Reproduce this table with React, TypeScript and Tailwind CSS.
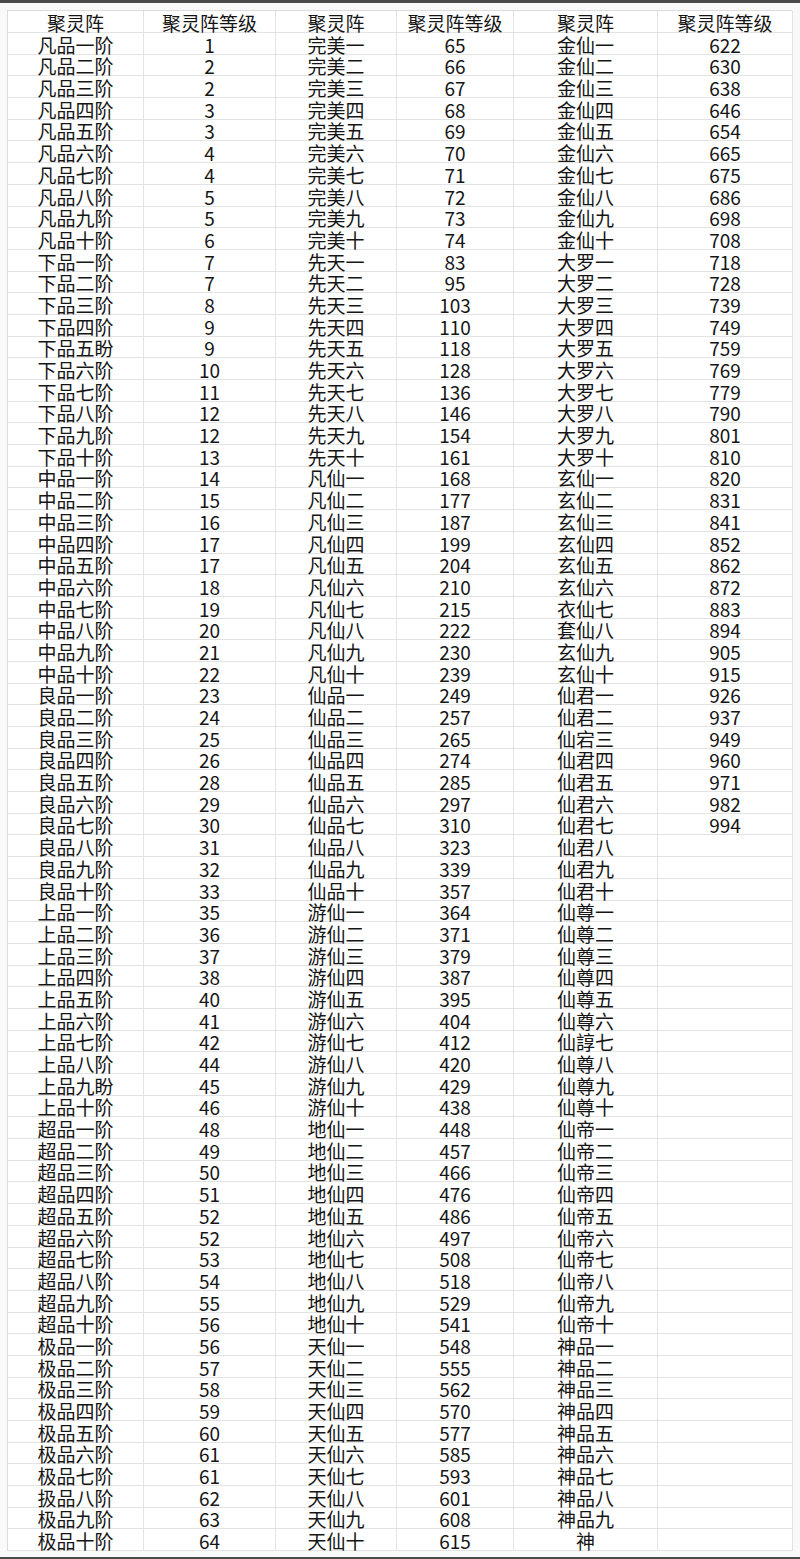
import React from "react";

const c1 = [
  "凡品一阶","凡品二阶","凡品三阶","凡品四阶","凡品五阶","凡品六阶","凡品七阶","凡品八阶","凡品九阶","凡品十阶",
  "下品一阶","下品二阶","下品三阶","下品四阶","下品五盼","下品六阶","下品七阶","下品八阶","下品九阶","下品十阶",
  "中品一阶","中品二阶","中品三阶","中品四阶","中品五阶","中品六阶","中品七阶","中品八阶","中品九阶","中品十阶",
  "良品一阶","良品二阶","良品三阶","良品四阶","良品五阶","良品六阶","良品七阶","良品八阶","良品九阶","良品十阶",
  "上品一阶","上品二阶","上品三阶","上品四阶","上品五阶","上品六阶","上品七阶","上品八阶","上品九盼","上品十阶",
  "超品一阶","超品二阶","超品三阶","超品四阶","超品五阶","超品六阶","超品七阶","超品八阶","超品九阶","超品十阶",
  "极品一阶","极品二阶","极品三阶","极品四阶","极品五阶","极品六阶","极品七阶","扱品八阶","极品九阶","极品十阶",
];
const c2 = [1,2,2,3,3,4,4,5,5,6,7,7,8,9,9,10,11,12,12,13,14,15,16,17,17,18,19,20,21,22,23,24,25,26,28,29,30,31,32,33,35,36,37,38,40,41,42,44,45,46,48,49,50,51,52,52,53,54,55,56,56,57,58,59,60,61,61,62,63,64];
const nums = ["一","二","三","四","五","六","七","八","九","十"];
const c3 = ["完美","先天","凡仙","仙品","游仙","地仙","天仙"].flatMap((p) => nums.map((n) => p + n));
const c4 = [65,66,67,68,69,70,71,72,73,74,83,95,103,110,118,128,136,146,154,161,168,177,187,199,204,210,215,222,230,239,249,257,265,274,285,297,310,323,339,357,364,371,379,387,395,404,412,420,429,438,448,457,466,476,486,497,508,518,529,541,548,555,562,570,577,585,593,601,608,615];
const c5 = [
  ...nums.map((n) => "金仙" + n),
  ...nums.map((n) => "大罗" + n),
  "玄仙一","玄仙二","玄仙三","玄仙四","玄仙五","玄仙六","衣仙七","套仙八","玄仙九","玄仙十",
  "仙君一","仙君二","仙宕三","仙君四","仙君五","仙君六","仙君七","仙君八","仙君九","仙君十",
  "仙尊一","仙尊二","仙尊三","仙尊四","仙尊五","仙尊六","仙諄七","仙尊八","仙尊九","仙尊十",
  ...nums.map((n) => "仙帝" + n),
  "神品一","神品二","神品三","神品四","神品五","神品六","神品七","神品八","神品九","神",
];
const c6 = [622,630,638,646,654,665,675,686,698,708,718,728,739,749,759,769,779,790,801,810,820,831,841,852,862,872,883,894,905,915,926,937,949,960,971,982,994];

const header = ["聚灵阵", "聚灵阵等级", "聚灵阵", "聚灵阵等级", "聚灵阵", "聚灵阵等级"];

function Cell({ children, h }: { children?: React.ReactNode; h: "head" | "row" }) {
  return (
    <div
      className={
        "flex items-end justify-center border-b border-r border-[#e3e3e3] leading-[19px] " +
        (h === "head" ? "h-[22px]" : "h-[21.7px]")
      }
    >
      {children}
    </div>
  );
}

export default function App() {
  const rows = c1.map((_, i) => [c1[i], c2[i], c3[i], c4[i], c5[i], c6[i] ?? ""]);
  return (
    <div
      className="w-[800px] h-[1559px] bg-[#f9f9f9] flex flex-col text-[#151515] text-[19px]"
      style={{ fontFamily: '"Noto Sans CJK SC", "Noto Sans", sans-serif' }}
    >
      <div className="h-[3px] bg-[#4b4b4b]" />
      <div className="h-[7px]" />
      <div className="pl-[7px]">
        <div className="grid grid-cols-[136px_132px_121px_117px_144px_135px] w-[785px] border-l border-t border-[#dcdcdc] bg-white">
          {header.map((t, i) => (
            <Cell key={"h" + i} h="head">{t}</Cell>
          ))}
          {rows.map((r, i) =>
            r.map((v, j) => (
              <Cell key={i + "-" + j} h="row">{v}</Cell>
            ))
          )}
        </div>
      </div>
      <div className="flex-1" />
      <div className="h-[2px] bg-[#4b4b4b]" />
    </div>
  );
}
